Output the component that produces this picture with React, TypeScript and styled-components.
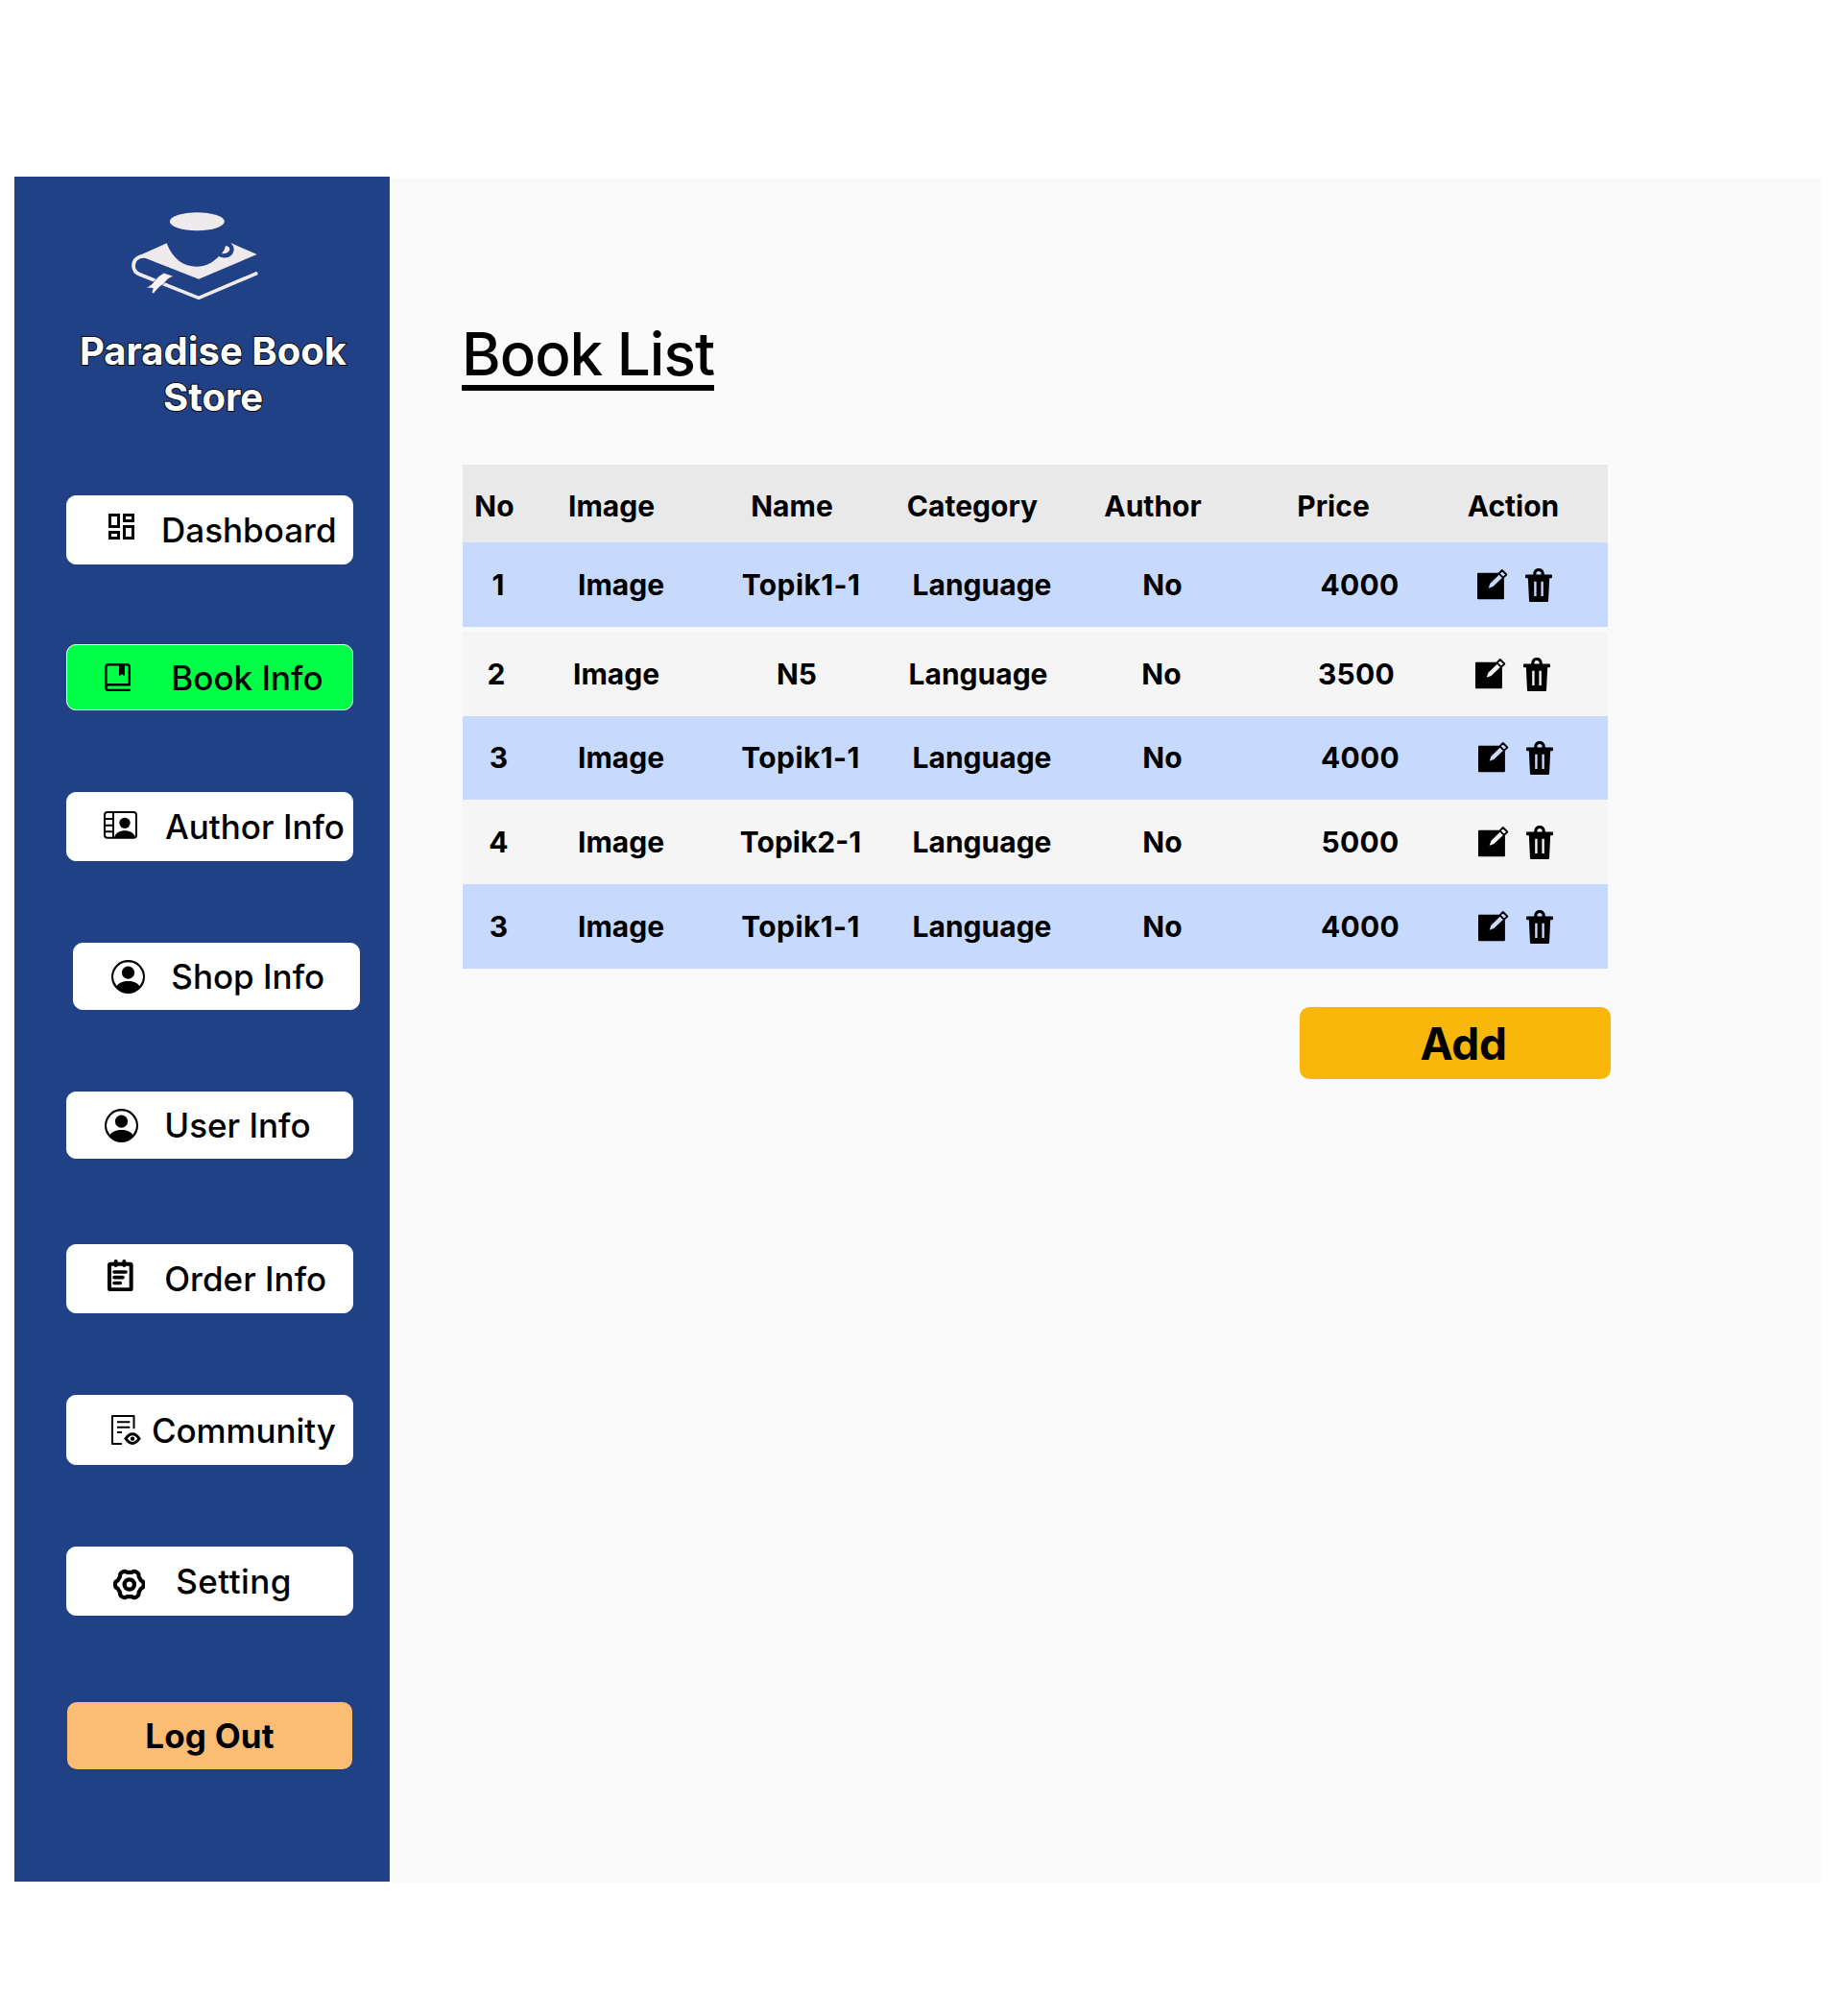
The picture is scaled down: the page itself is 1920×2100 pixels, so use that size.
import React from 'react';
import styled, { createGlobalStyle } from 'styled-components';

const GlobalStyle = createGlobalStyle`
  *, *::before, *::after { box-sizing: border-box; }
  body { margin: 0; background: #fff; font-family: Inter, "Liberation Sans", sans-serif; color: #000; }
  svg { display: block; flex: none; }
`;

const Page = styled.div`
  display: flex;
  align-items: flex-start;
  width: 1920px;
  height: 2100px;
  padding: 184px 23px 0 15px;
  background: #fff;
`;

const Sidebar = styled.aside`
  flex: none;
  width: 391px;
  height: 1776px;
  padding-top: 33px;
  background: #204186;
`;

const LogoRow = styled.div`
  padding-left: 118px;
`;

const Brand = styled.h1`
  width: 300px;
  margin: 25px 0 78px 57px;
  font-size: 40px;
  font-weight: 700;
  line-height: 48px;
  text-align: center;
  color: #fff;
  -webkit-text-stroke: 2px #0a0a0a;
  paint-order: stroke fill;
`;

const Nav = styled.nav`
  display: flex;
  flex-direction: column;
  padding-left: 54px;
`;

const NavButton = styled.button<{
  $height: number;
  $after: number;
  $start: number;
  $gap: number;
  $shift?: number;
  $active?: boolean;
  $track?: number;
}>`
  display: flex;
  align-items: center;
  gap: ${p => p.$gap}px;
  width: 299px;
  height: ${p => p.$height}px;
  margin: 0 0 ${p => p.$after}px ${p => p.$shift ?? 0}px;
  padding: 0 0 0 ${p => p.$start}px;
  border: 1px solid #fff;
  border-radius: 10px;
  background: ${p => (p.$active ? '#00ff47' : '#fff')};
  color: #000;
  font: 500 35px/42px Inter, "Liberation Sans", sans-serif;
  letter-spacing: ${p => p.$track ?? 0}px;
  white-space: nowrap;
`;

const IconSlot = styled.span<{ $lift: number }>`
  display: block;
  margin-bottom: ${p => p.$lift}px;
`;

const LogoutButton = styled.button`
  width: 297px;
  height: 70px;
  margin-left: 1px;
  padding: 0;
  border: 0;
  border-radius: 10px;
  background: #fbbc74;
  color: #000;
  font: 700 35px/42px Inter, "Liberation Sans", sans-serif;
  letter-spacing: 0.2px;
`;

const Main = styled.main`
  flex: 1;
  height: 1776px;
  margin-top: 1px;
  padding: 150px 0 0 75px;
  background: #fafafa;
`;

const Title = styled.h2`
  width: fit-content;
  margin: 0 0 77px;
  padding-top: 1px;
  border-bottom: 6px solid #000;
  font-size: 62px;
  font-weight: 500;
  line-height: 65px;
  letter-spacing: -1px;
`;

const Table = styled.div`
  width: 1193px;
  margin-left: 1px;
  font-size: 30px;
  font-weight: 700;
  line-height: 36px;
`;

const Row = styled.div<{ $cols: string; $height: number; $bg: string; $top?: number; $bottom?: number; $gap?: number }>`
  display: grid;
  grid-template-columns: ${p => p.$cols};
  align-items: center;
  height: ${p => p.$height}px;
  padding-top: ${p => p.$top ?? 0}px;
  padding-bottom: ${p => p.$bottom ?? 0}px;
  margin-bottom: ${p => p.$gap ?? 0}px;
  background: ${p => p.$bg};
`;

const Cell = styled.span<{ $track?: number }>`
  text-align: center;
  letter-spacing: ${p => p.$track ?? 0}px;
  white-space: nowrap;
`;

const Actions = styled.span<{ $start: number }>`
  display: flex;
  gap: 18px;
  padding-left: ${p => p.$start}px;
`;

const AddButton = styled.button`
  display: block;
  width: 324px;
  height: 75px;
  margin: 40px 0 0 873px;
  padding: 0 0 0 17px;
  border: 0;
  border-radius: 10px;
  background: #f9b70b;
  color: #000;
  font: 700 46px/56px Inter, "Liberation Sans", sans-serif;
  letter-spacing: -0.4px;
`;

const Logo = () => (
  <svg width="140" height="100" viewBox="399 141 420 300">
    <ellipse cx="616" cy="182" rx="85.5" ry="28.5" fill="#efebec" />
    <path
      fill="#efebec"
      d="M521 250C540 300 574 323 614 323C644 323 666 310 684 291C706 301 728 294 731 270Q731 258 721 249L803 285L621 362L455 297L436 288Z"
    />
    <path fill="#efebec" d="M705 258Q718 259 718 271Q713 284 693 283Q703 272 705 258Z" />
    <path
      fill="none"
      stroke="#efebec"
      strokeWidth="11"
      d="M458 291C430 287 417 304 417 320C417 334 424 343 438 348L621 421L803 344"
    />
    <path fill="#efebec" d="M797 342L800 338L806 343L804 350Z" />
    <path
      fill="#fdf4f3"
      stroke="#204186"
      strokeWidth="2"
      d="M512 343L543 353Q524 358 512 377Q498 384 480 407L474 405L478 391L456 389Q474 382 483 368Q494 352 512 343Z"
    />
  </svg>
);

const DashboardIcon = () => (
  <svg width="27" height="27" viewBox="3 3 18 18">
    <path d="M19 5v2h-4V5h4M9 5v6H5V5h4m10 8v6h-4v-6h4M9 17v2H5v-2h4M21 3h-8v6h8V3zM11 3H3v10h8V3zm10 8h-8v10h8V11zm-10 4H3v6h8v-6z" />
  </svg>
);

const BookIcon = () => (
  <svg width="27.3" height="29.3" viewBox="177 572 82 88" fill="none" stroke="#000" strokeWidth="7.5">
    <path d="M254.5 642V584Q254.5 576 247 576H190Q181 576 181 585V648Q181 656 190 656H258M181 648Q181 639 190 639H255" />
    <path d="M222 576H240V612L231 606L222 612Z" fill="#000" stroke="none" />
  </svg>
);

const AuthorIcon = () => (
  <svg width="35" height="28.7" viewBox="174 136 105 86" fill="none" stroke="#000" strokeWidth="6">
    <rect x="177" y="139" width="99" height="80" rx="9" />
    <path d="M204 139V219M177 160H204M177 180H204M177 200H204" />
    <circle cx="240" cy="173" r="17" fill="#000" stroke="none" />
    <path d="M207 220C210 203 225 197 240 197C255 197 270 203 273 220Z" fill="#000" stroke="none" />
  </svg>
);

const PersonIcon = () => (
  <svg width="35" height="35" viewBox="0 0 16 16">
    <path d="M11 6a3 3 0 1 1-6 0 3 3 0 0 1 6 0" />
    <path
      fillRule="evenodd"
      d="M0 8a8 8 0 1 1 16 0A8 8 0 0 1 0 8m8-7a7 7 0 0 0-5.468 11.37C3.242 11.226 4.805 10 8 10s4.757 1.225 5.468 2.37A7 7 0 0 0 8 1"
    />
  </svg>
);

const OrderIcon = () => (
  <svg width="26.7" height="33.3" viewBox="187 576 80 100" fill="none" stroke="#000" strokeLinecap="round">
    <rect x="193" y="590" width="68" height="80" rx="3" strokeWidth="12" />
    <path strokeWidth="12" d="M213 582V594M239 582V594" />
    <path strokeWidth="11" d="M208 615H244M208 632H235M208 649.5H227" />
  </svg>
);

const CommunityIcon = () => (
  <svg width="30.7" height="31" viewBox="198 131 92 93" fill="none" stroke="#000" strokeWidth="6">
    <path strokeLinejoin="round" d="M268.5 174V134H201V221H231" />
    <path d="M216 153H256M216 169H256M216 185H231" />
    <path strokeWidth="9" d="M243 205Q264 176 285 205Q264 234 243 205Z" />
    <circle cx="264" cy="205" r="6.5" fill="#000" stroke="none" />
  </svg>
);

const gearOutline = Array.from({ length: 120 }, (_, i) => {
  const angle = (i / 120) * Math.PI * 2;
  const radius = 41.2 + 3.5 * Math.tanh(2 * Math.cos(6 * angle));
  return `${(radius * Math.cos(angle)).toFixed(2)} ${(radius * Math.sin(angle)).toFixed(2)}`;
}).join('L');

const GearIcon = () => (
  <svg width="33.6" height="33" viewBox="-50.5 -49.5 101 99" fill="none" stroke="#000">
    <path strokeWidth="12.5" strokeLinejoin="round" d={`M${gearOutline}Z`} />
    <circle r="15.5" strokeWidth="13" />
  </svg>
);

const EditIcon = () => (
  <svg width="32" height="35" viewBox="0 0 32 35">
    <path d="M1 4.8H22.2L23.2 6.2L13.4 15.8L11.7 20.7L16.4 19L26.4 9.4L27.9 10.6V31.3Q27.9 32.3 26.9 32.3H1Q0 32.3 0 31.3V5.8Q0 4.8 1 4.8Z" />
    <path fill="none" stroke="#000" strokeWidth="1.8" strokeLinejoin="round" d="M25.8 2L30.3 6.5L27 9.9L22.5 5.4Z" />
  </svg>
);

const TrashIcon = () => (
  <svg width="28" height="35" viewBox="0 0 28 35">
    <path fill="none" stroke="#000" strokeWidth="3.2" d="M9.8 8V5.7A4.2 4.2 0 0 1 18.2 5.7V8" />
    <rect y="6.6" width="28" height="3.6" rx="1" />
    <path fillRule="evenodd" d="M2.8 9.5H25.2L24 34Q24 35 23 35H5Q4 35 4 34ZM9.2 13.8V29H11.6V13.8ZM16.4 13.8V29H18.8V13.8Z" />
  </svg>
);

const navItems = [
  { label: 'Dashboard', icon: <DashboardIcon />, height: 72, after: 83, start: 43, gap: 28, lift: 7 },
  { label: 'Book Info', icon: <BookIcon />, height: 69, after: 85, start: 39, gap: 42, lift: 0, active: true },
  { label: 'Author Info', icon: <AuthorIcon />, height: 72, after: 85, start: 38, gap: 29, lift: 3 },
  { label: 'Shop Info', icon: <PersonIcon />, height: 70, after: 85, start: 39, gap: 27.3, lift: 0, shift: 7 },
  { label: 'User Info', icon: <PersonIcon />, height: 70, after: 89, start: 39, gap: 27.3, lift: 0 },
  { label: 'Order Info', icon: <OrderIcon />, height: 72, after: 85, start: 42.3, gap: 32.3, lift: 6.6 },
  { label: 'Community', icon: <CommunityIcon />, height: 73, after: 85, start: 46, gap: 11.3, lift: 0, track: -0.1 },
  { label: 'Setting', icon: <GearIcon />, height: 72, after: 90, start: 47.7, gap: 32, lift: -7, track: 0.45 },
];

const headings = ['No', 'Image', 'Name', 'Category', 'Author', 'Price', 'Action'];

const BLUE = '#c7d9fd';
const GREY = '#f5f5f5';

const books = [
  {
    cells: ['1', 'Image', 'Topik1-1', 'Language', 'No', '4000'],
    bg: BLUE, height: 88, gap: 5, bottom: 0, start: 13,
    cols: '74px 182px 193px 184px 192px 219px 1fr',
  },
  {
    cells: ['2', 'Image', 'N5', 'Language', 'No', '3500'],
    bg: GREY, height: 88, gap: 0, bottom: 0, start: 21,
    cols: '70px 180px 196px 182px 200px 206px 1fr',
  },
  {
    cells: ['3', 'Image', 'Topik1-1', 'Language', 'No', '4000'],
    bg: BLUE, height: 87, gap: 0, bottom: 1, start: 13,
    cols: '75px 180px 194px 184px 192px 220px 1fr',
  },
  {
    cells: ['4', 'Image', 'Topik2-1', 'Language', 'No', '5000'],
    bg: GREY, height: 88, gap: 0, bottom: 0, start: 13,
    cols: '75px 180px 194px 184px 192px 220px 1fr',
  },
  {
    cells: ['3', 'Image', 'Topik1-1', 'Language', 'No', '4000'],
    bg: BLUE, height: 88, gap: 0, bottom: 0, start: 13,
    cols: '75px 180px 194px 184px 192px 220px 1fr',
  },
];

const tracking: Record<string, number> = { 'Topik1-1': 0.4, '4000': 0.3, '3500': 0.3, '5000': 0.3 };

export default function App() {
  return (
    <>
      <GlobalStyle />
      <Page>
        <Sidebar>
          <LogoRow>
            <Logo />
          </LogoRow>
          <Brand>Paradise Book Store</Brand>
          <Nav>
            {navItems.map(n => (
              <NavButton
                key={n.label}
                $height={n.height}
                $after={n.after}
                $start={n.start}
                $gap={n.gap}
                $shift={n.shift}
                $active={n.active}
                $track={n.track}
              >
                <IconSlot $lift={n.lift}>{n.icon}</IconSlot>
                {n.label}
              </NavButton>
            ))}
            <LogoutButton>Log Out</LogoutButton>
          </Nav>
        </Sidebar>
        <Main>
          <Title>Book List</Title>
          <Table>
            <Row $cols="66px 178px 198px 178px 198px 178px 197px" $height={81} $top={4} $bg="#e9e9e9">
              {headings.map(h => (
                <Cell key={h}>{h}</Cell>
              ))}
            </Row>
            {books.map((b, i) => (
              <Row key={i} $cols={b.cols} $height={b.height} $bottom={b.bottom} $gap={b.gap} $bg={b.bg}>
                {b.cells.map((c, j) => (
                  <Cell key={j} $track={tracking[c]}>{c}</Cell>
                ))}
                <Actions $start={b.start}>
                  <EditIcon />
                  <TrashIcon />
                </Actions>
              </Row>
            ))}
          </Table>
          <AddButton>Add</AddButton>
        </Main>
      </Page>
    </>
  );
}
